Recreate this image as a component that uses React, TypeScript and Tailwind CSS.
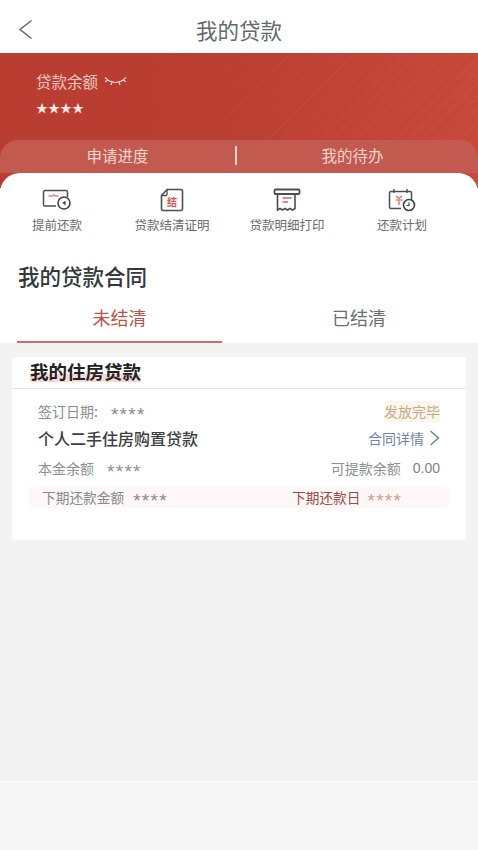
const font = "font-['Noto_Sans_CJK_SC','Liberation_Sans',sans-serif]";
const maskStars = "font-['Liberation_Sans'] text-[19px] leading-[18px] pt-[7px] tracking-[1.300px]";

function PrepayIcon() {
  return (
    <svg width="30" height="22" viewBox="0 0 30 22" fill="none">
      <path d="M14 17H3a1.500 1.500 0 0 1-1.500-1.500V3A1.500 1.500 0 0 1 3 1.500h21A1.500 1.500 0 0 1 25.500 3v5" stroke="#4a4f52" strokeWidth="1.500" />
      <path d="M6.500 7h4l1.500-1 1.500 1h3" stroke="#d98a80" strokeWidth="1.500" />
      <circle cx="22" cy="14" r="6" fill="#fff" stroke="#3f4447" strokeWidth="1.600" />
      <path d="M23.500 11.500 20.500 14l3 2.500" fill="#3f4447" />
    </svg>
  );
}

function CertIcon() {
  return (
    <svg width="26" height="24" viewBox="0 0 26 24" fill="none">
      <path d="M8 1.500h14a1.500 1.500 0 0 1 1.500 1.500v18a1.500 1.500 0 0 1-1.500 1.500H4A1.500 1.500 0 0 1 2.500 21V7.500Z" stroke="#4a4f52" strokeWidth="1.600" />
      <path d="M8 1.500v5a1 1 0 0 1-1 1H2.500" stroke="#4a4f52" strokeWidth="1.300" />
      <rect x="7.500" y="9" width="11" height="10" fill="#fbeeec" />
      <text x="13" y="17.500" textAnchor="middle" fontSize="10" fontWeight="700" fill="#d2584c" fontFamily="Noto Sans CJK SC">结</text>
    </svg>
  );
}

function PrintIcon() {
  return (
    <svg width="28" height="24" viewBox="0 0 28 24" fill="none">
      <rect x="1.500" y="1.500" width="25" height="4.500" rx="1" stroke="#4a4f52" strokeWidth="1.800" />
      <path d="M4.500 5v17l2.500-1.500 2.500 1.500 2.500-1.500 2.500 1.500 2.500-1.500 2.500 1.500 2.500-1.500V5" stroke="#4a4f52" strokeWidth="1.600" />
      <path d="M9.500 10h9M9.500 14h5.500" stroke="#d2685c" strokeWidth="1.600" />
    </svg>
  );
}

function PlanIcon() {
  return (
    <svg width="28" height="24" viewBox="0 0 28 24" fill="none">
      <path d="M13 20.500H3A1.500 1.500 0 0 1 1.500 19V5A1.500 1.500 0 0 1 3 3.500h19A1.500 1.500 0 0 1 23.500 5v7" stroke="#4a4f52" strokeWidth="1.500" />
      <path d="M6 1v4M19 1v4" stroke="#4a4f52" strokeWidth="1.400" />
      <path d="M8 8l3 2.500L14 8M7.500 12h7M11 10v7" stroke="#e08d84" strokeWidth="1.700" />
      <circle cx="21" cy="17" r="5.500" fill="#fff" stroke="#3f4447" strokeWidth="1.600" />
      <path d="M21 14.500V17.500h-2.500" stroke="#3f4447" strokeWidth="1.200" />
    </svg>
  );
}

const actions = [
  { label: "提前还款", icon: <PrepayIcon />, offset: "ml-[17px]" },
  { label: "贷款结清证明", icon: <CertIcon />, offset: "ml-[35px]" },
  { label: "贷款明细打印", icon: <PrintIcon />, offset: "ml-[35px]" },
  { label: "还款计划", icon: <PlanIcon />, offset: "ml-[35px]" },
];

export default function App() {
  return (
    <div className={`${font} w-[478px] h-[850px] flex flex-col bg-[#f3f3f3] overflow-hidden`}>
      {/* Header */}
      <header className="h-[53px] shrink-0 bg-white relative flex items-center justify-center pt-[8px]">
        <svg className="absolute left-[18px] top-[19px]" width="15" height="21" viewBox="0 0 15 21" fill="none">
          <path d="M13.500 1.500 2 10.500l11.500 9" stroke="#62686b" strokeWidth="1.500" />
        </svg>
        <span className="text-[21.500px] text-[#626a6d]">我的贷款</span>
      </header>

      {/* Red banner */}
      <section className="h-[135px] shrink-0 bg-[linear-gradient(100deg,#b73c2f_0%,#bb3f32_50%,#c8493c_100%)] flex flex-col">
        <div className="h-[87px] pl-[36px] pt-[18px] bg-[linear-gradient(90deg,#b93d30_25%,transparent_60%),repeating-linear-gradient(135deg,transparent_0,transparent_7px,rgba(255,255,255,0.04)_8px,transparent_9px)]">
          <div className="flex items-center gap-[6px] h-[20px] text-[15.500px] leading-[20px] text-[#f0c9c3]">
            贷款余额
            <svg width="23" height="11" viewBox="0 0 23 11" fill="none" stroke="#f7dcd8" strokeWidth="1.100">
              <path d="M3 3.500c5 4 12 4 17 0M1 1.500l3 2.500M22 1.500 19 4M1 6l3-2.500M22 6l-3-2.500M8 6l-1 3M15 6l1 3" />
            </svg>
          </div>
          <div className="mt-[6px] text-[12px] leading-[22px] text-[#fbe6e3]">★★★★</div>
        </div>
        <div className="h-[33px] rounded-t-[18px] bg-[#c35a4f] flex items-center pb-[2px] text-[15.500px] text-[#f6d6d1]">
          <div className="w-[235px] text-center">申请进度</div>
          <div className="w-[2px] h-[19px] bg-[#f2d6d1]" />
          <div className="flex-1 text-center pr-[10px]">我的待办</div>
        </div>
      </section>

      {/* White panel */}
      <section className="-mt-[15px] h-[170px] shrink-0 bg-white rounded-t-[20px] flex flex-col">
        <div className="flex pt-[15px]">
          {actions.map((a) => (
            <div key={a.label} className={`${a.offset} w-[80px] flex flex-col items-center`}>
              <div className="h-[24px] flex items-center justify-center">{a.icon}</div>
              <div className="mt-[5px] text-[12.500px] leading-[16px] whitespace-nowrap text-[#666c6f]">{a.label}</div>
            </div>
          ))}
        </div>
        <h2 className="mt-[29px] pl-[18px] text-[21.500px] leading-[28px] font-medium text-[#33383a]">我的贷款合同</h2>
        <div className="flex flex-1 text-[18px] leading-[24px]">
          <div className="ml-[17px] w-[205px] border-b-2 border-[#c5736a] text-center text-[#bb5348] pt-[15px]">未结清</div>
          <div className="flex-1 text-center text-[#6b7073] pt-[15px] pl-[18px]">已结清</div>
        </div>
      </section>

      {/* Contract card */}
      <section className="mt-[14px] mx-[12px] h-[183px] shrink-0 bg-white rounded-[3px]">
        <div className="h-[32px] border-b border-[#e6e6e6] pl-[18px] pb-[3px] flex items-center">
          <span className="text-[18.500px] leading-[22px] font-bold text-[#222] bg-[linear-gradient(transparent_65%,#f8d9d6_65%)]">我的住房贷款</span>
        </div>
        <div className="px-[26px] pt-[13px] text-[14px]">
          <div className="flex justify-between items-center h-[18px] text-[#888d90]">
            <span className="flex items-center gap-[13px]">
              签订日期:<span className={maskStars}>****</span>
            </span>
            <span className="bg-[#fcf6ec] text-[#c6a98a]">发放完毕</span>
          </div>
          <div className="flex justify-between items-center mt-[8px] h-[20px]">
            <span className="text-[16px] font-medium text-[#3c4042]">个人二手住房购置贷款</span>
            <span className="flex items-center text-[#6d86a6]">
              合同详情
              <svg className="ml-[5px]" width="11" height="16" viewBox="0 0 11 16" fill="none">
                <path d="M1.500 1 9.500 8l-8 7" stroke="#667f9c" strokeWidth="1.400" />
              </svg>
            </span>
          </div>
          <div className="flex justify-between items-center mt-[11px] h-[18px] text-[#8b9093]">
            <span className="flex items-center gap-[13px]">
              本金余额<span className={maskStars}>****</span>
            </span>
            <span className="flex items-center gap-[12px]">
              可提款余额<span className="font-['Liberation_Sans'] text-[#7d8285]">0.00</span>
            </span>
          </div>
        </div>
        <div className="mx-[17px] mt-[10px] h-[21px] rounded-[6px] bg-[#fdf8f7] flex items-center pl-[13px] text-[13.700px]">
          <span className="w-[250px] flex items-center gap-[9px] text-[#85898c]">
            下期还款金额<span className={`${maskStars} text-[#8a8a8a]`}>****</span>
          </span>
          <span className="flex items-center gap-[7px] text-[#9a4b44]">
            下期还款日<span className={`${maskStars} text-[#d39a94]`}>****</span>
          </span>
        </div>
      </section>

      {/* Bottom */}
      <div className="h-[241px] shrink-0" />
      <div className="h-[2px] shrink-0 bg-[#fafafa]" />
      <div className="flex-1 bg-[#f6f6f6]" />
    </div>
  );
}
